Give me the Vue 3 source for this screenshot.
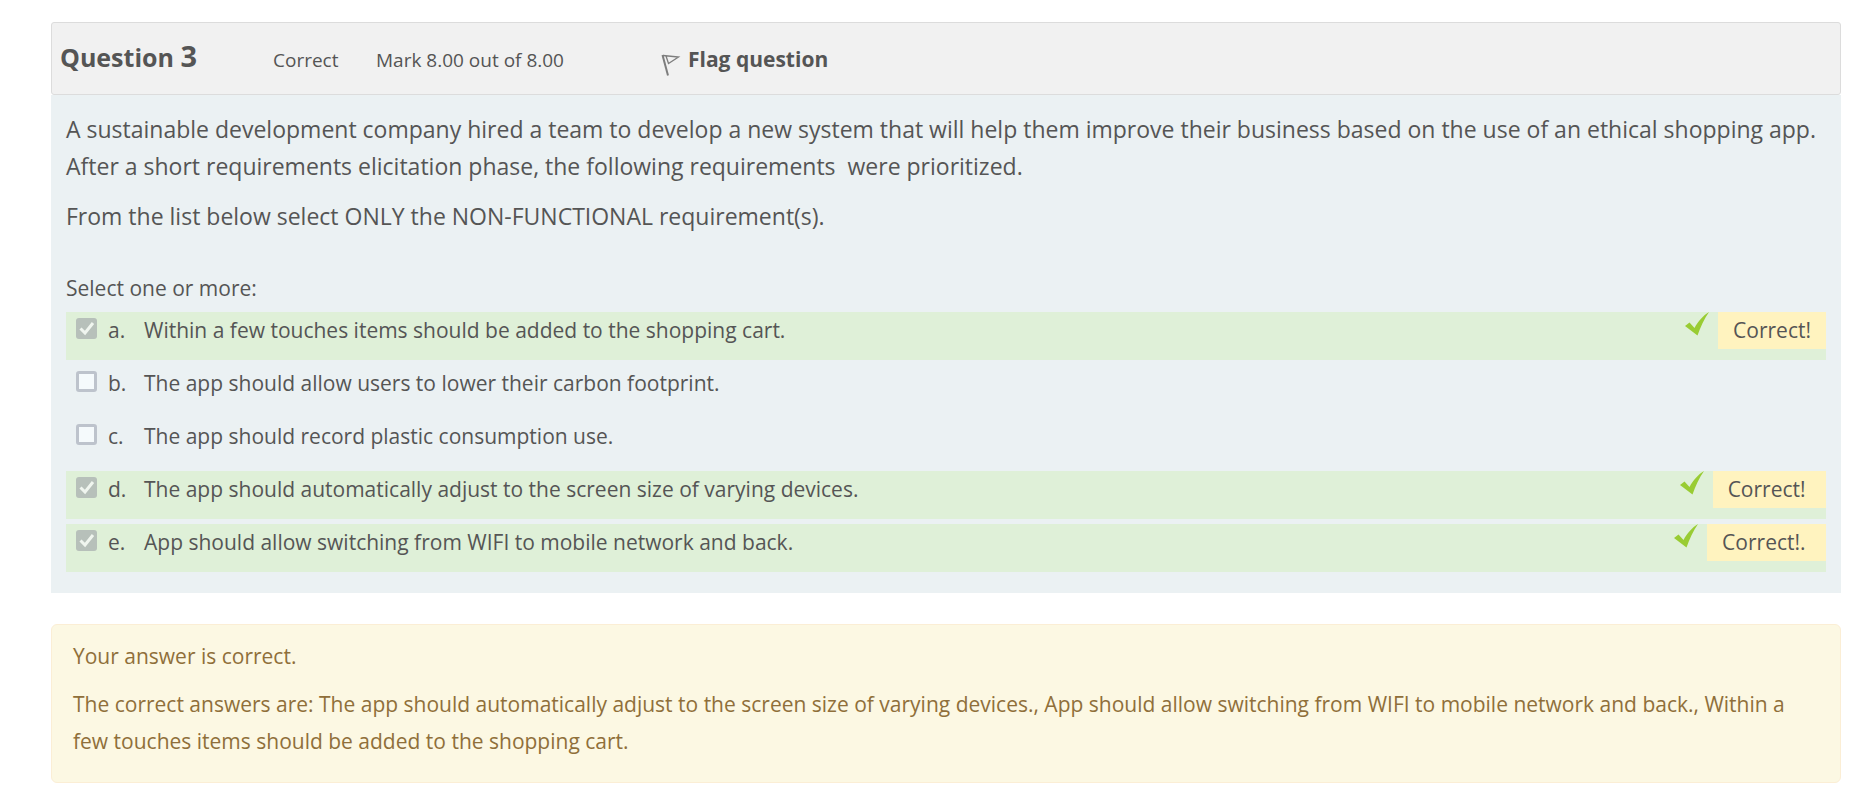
<script setup>
const answers = [
  { key: 'a', text: 'Within a few touches items should be added to the shopping cart.', checked: true, feedback: 'Correct!' },
  { key: 'b', text: 'The app should allow users to lower their carbon footprint.', checked: false },
  { key: 'c', text: 'The app should record plastic consumption use.', checked: false },
  { key: 'd', text: 'The app should automatically adjust to the screen size of varying devices.', checked: true, feedback: 'Correct!\u00a0' },
  { key: 'e', text: 'App should allow switching from WIFI to mobile network and back.', checked: true, feedback: 'Correct!.\u00a0' }
]
</script>

<template>
  <main class="question">
    <header class="info">
      <h3 class="title">Question <span class="number">3</span></h3>
      <div class="state">Correct</div>
      <div class="grade">Mark 8.00 out of 8.00</div>
      <button type="button" class="flag">
        <svg class="flag-icon" width="20" height="22" viewBox="0 0 20 22" fill="none" aria-hidden="true">
          <path d="M1.5 1L7 21.500" stroke="#7d7d7d" stroke-width="2" />
          <path d="M2 1.500L17.500 3L7.500 9.500L5 2" stroke="#7d7d7d" stroke-width="1.3" />
        </svg>
        <span>Flag question</span>
      </button>
    </header>

    <section class="formulation">
      <div class="qtext">
        <p>A sustainable development company hired a team to develop a new system that will help them improve their business based on the use of an ethical shopping app. After a short requirements elicitation phase, the following requirements&nbsp; were prioritized.</p>
        <p>From the list below select ONLY the NON-FUNCTIONAL requirement(s).</p>
      </div>
      <fieldset class="choices">
        <legend class="prompt">Select one or more:</legend>
        <div v-for="a in answers" :key="a.key" class="answer" :class="{ correct: a.feedback }">
          <input :id="'answer-' + a.key" class="box" type="checkbox" :checked="a.checked" disabled />
          <label class="label" :for="'answer-' + a.key">
            <span class="letter">{{ a.key }}.</span>
            <span>{{ a.text }}</span>
          </label>
          <template v-if="a.feedback">
            <svg class="tick" width="24" height="24" viewBox="0 0 24 24" aria-hidden="true">
              <path d="M0 14L4.500 10.500L9.500 16C13 9.500 18 3.500 24 0C19 7 15.500 15 12.500 23.500Z" fill="#99cc33" />
            </svg>
            <span class="feedback">{{ a.feedback }}</span>
          </template>
        </div>
      </fieldset>
    </section>

    <section class="outcome">
      <p>Your answer is correct.</p>
      <p>The correct answers are: The app should automatically adjust to the screen size of varying devices., App should allow switching from WIFI to mobile network and back., Within a few touches items should be added to the shopping cart.</p>
    </section>
  </main>
</template>

<style>
body {
  background: #fff;
}
</style>

<style scoped>
.question {
  margin: 22px 28px 24px 51px;
  font-family: "Open Sans", "Noto Sans", sans-serif;
  font-size: 21px;
  line-height: 37px;
  color: #555;
}
.info {
  display: flex;
  align-items: baseline;
  box-sizing: border-box;
  padding: 14px 8px 15px;
  border: 1px solid #dcdcdc;
  border-radius: 3px;
  background: #f1f1f1;
}
.title {
  margin: 0;
  width: 213px;
  font-size: 25px;
  font-weight: 700;
}
.number {
  font-size: 29px;
}
.state {
  width: 103px;
  font-size: 19px;
}
.grade {
  width: 285px;
  font-size: 19px;
}
.flag {
  display: flex;
  align-items: baseline;
  gap: 7px;
  padding: 0;
  border: 0;
  background: none;
  color: inherit;
  font: inherit;
  font-weight: 700;
}
.flag-icon {
  align-self: flex-end;
  margin-bottom: 2px;
}
.formulation {
  padding: 16px 15px 21px;
  background: #ebf1f3;
}
.qtext {
  font-size: 23px;
}
p {
  margin: 0;
}
.qtext p + p {
  margin-top: 13px;
}
.choices {
  margin: 35px 0 0;
  padding: 0;
  border: 0;
  min-width: 0;
}
.prompt {
  padding: 0;
  margin-bottom: 5px;
}
.answer {
  display: flex;
  align-items: flex-start;
  height: 48px;
}
.answer + .answer {
  margin-top: 5px;
}
.correct {
  background: #dff0d8;
}
.box {
  appearance: none;
  flex: none;
  box-sizing: border-box;
  width: 21px;
  height: 21px;
  margin: 6px 11px 0 10px;
  border: 3px solid #bdc3cc;
  border-radius: 3px;
  background: #f5fafc;
}
.box:checked {
  border: 0;
  background: #b7c0ba url("data:image/svg+xml,%3Csvg xmlns='http://www.w3.org/2000/svg' viewBox='0 0 21 21'%3E%3Cpath d='M4.500 10.500L9 15L17 5' fill='none' stroke='%23f0f5ef' stroke-width='3'/%3E%3C/svg%3E");
}
.label {
  display: flex;
  flex: 1;
}
.letter {
  flex: none;
  width: 36px;
}
.tick {
  flex: none;
  margin-right: 9px;
}
.feedback {
  flex: none;
  padding: 0 15px;
  background: #fff3bf;
}
.outcome {
  margin-top: 31px;
  padding: 13px 21px 22px;
  border: 1px solid #fbeed5;
  border-radius: 6px;
  background: #fcf8e3;
  color: #8f6f3a;
}
.outcome p + p {
  margin-top: 11px;
}
</style>
